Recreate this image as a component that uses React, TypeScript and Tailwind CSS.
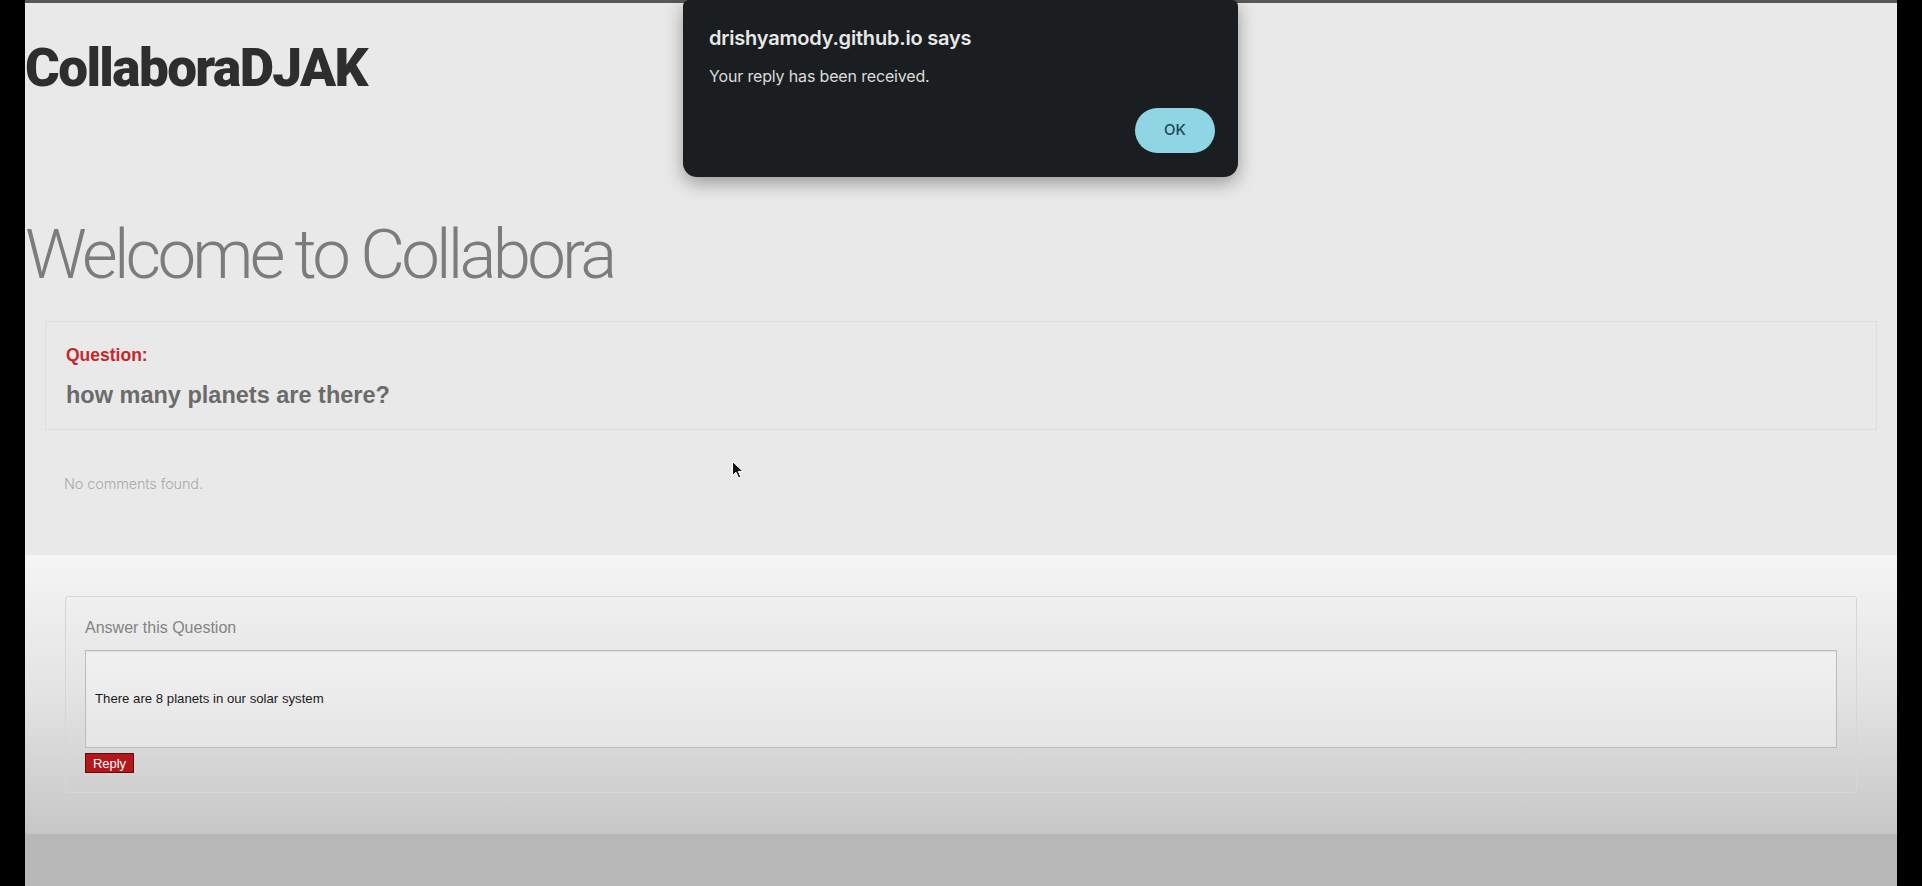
import React from 'react';

function Cursor() {
  return (
    <svg
      className="absolute left-[731px] top-[460px]"
      width="14"
      height="20"
      viewBox="0 0 14 20"
    >
      <path
        d="M1.5 1.5 L1.5 15.5 L5 12.2 L7.6 18 L9.8 17 L7.3 11.4 L12 11.4 Z"
        fill="#111"
        stroke="#fff"
        strokeWidth="1"
        strokeLinejoin="round"
      />
    </svg>
  );
}

function AlertDialog() {
  return (
    <div className="absolute left-[683px] top-0 flex h-[177px] w-[555px] flex-col rounded-b-[14px] rounded-t-[6px] bg-[#1b1e21] shadow-[0_6px_18px_rgba(0,0,0,0.35)] font-['Inter',sans-serif]">
      <div className="pl-[26px] pt-[28px]">
        <div className="text-[20px] font-semibold leading-none tracking-[-0.01em] text-[#e8e8e8]">
          drishyamody.github.io says
        </div>
        <div className="mt-[20px] text-[16px] leading-none tracking-[-0.01em] text-[#dcdcdc]">
          Your reply has been received.
        </div>
      </div>
      <div className="mt-auto flex justify-end pb-[24px] pr-[23px]">
        <button className="flex h-[45px] w-[80px] items-center justify-center rounded-full bg-[#8fd5e4] text-[15px] font-medium text-[#1d4752]">
          OK
        </button>
      </div>
    </div>
  );
}

export default function App() {
  return (
    <div className="relative flex h-[886px] w-[1922px] overflow-hidden bg-black">
      <div className="w-[25px] shrink-0 bg-black" />

      <div className="flex flex-1 flex-col">
        {/* top part */}
        <div className="h-[555px] border-t-[3px] border-[#585858] bg-[#e9e9e9]">
          <h2 className="mt-[39px] text-[53px] font-black leading-none tracking-[-0.03em] text-[#2e2e2e] font-['Roboto',sans-serif]">
            CollaboraDJAK
          </h2>

          <h1 className="mt-[125px] text-[69px] font-light leading-none tracking-[-0.055em] text-[#7c7c7c] font-['Roboto',sans-serif]">
            Welcome to Collabora
          </h1>

          <div className="mx-[20px] mt-[32px] border border-[#dedede] px-[20px] pb-[22px] pt-[25px] font-['Liberation_Sans',sans-serif]">
            <div className="text-[17.5px] font-bold leading-none text-[#c5282c]">
              Question:
            </div>
            <div className="mt-[19px] text-[23.5px] font-bold leading-none text-[#6b6b6b]">
              how many planets are there?
            </div>
          </div>

          <p className="ml-[39px] mt-[47px] text-[14.5px] font-light leading-none tracking-[-0.01em] text-[#a9a9a9] font-['Inter',sans-serif]">
            No comments found.
          </p>
        </div>

        {/* answer part */}
        <div className="h-[279px] bg-gradient-to-b from-[#f5f5f5] via-[#e3e3e3] to-[#c7c7c7] pt-[41px]">
          <div className="mx-[40px] h-[197px] rounded-[3px] border border-[#d6d6d6] px-[19px] pt-[23px] font-['Liberation_Sans',sans-serif]">
            <div className="text-[16px] leading-none text-[#838383]">
              Answer this Question
            </div>
            <div className="mt-[14px] flex h-[98px] items-center border border-[#bcbcbc] bg-gradient-to-b from-[#f1f1f1] to-[#e5e5e5] pl-[9px] shadow-[inset_0_1px_1px_rgba(0,0,0,0.08)]">
              <span className="text-[13.2px] text-[#1a1a1a]">
                There are 8 planets in our solar system
              </span>
            </div>
            <button className="mt-[5px] flex h-[20px] w-[49px] items-center justify-center border border-[#5e0c0e] bg-[#b3171b] text-[13px] leading-none text-white">
              Reply
            </button>
          </div>
        </div>

        <div className="flex-1 bg-[#b8b8b8]" />
      </div>

      <div className="w-[25px] shrink-0 bg-black" />

      <AlertDialog />
      <Cursor />
    </div>
  );
}
